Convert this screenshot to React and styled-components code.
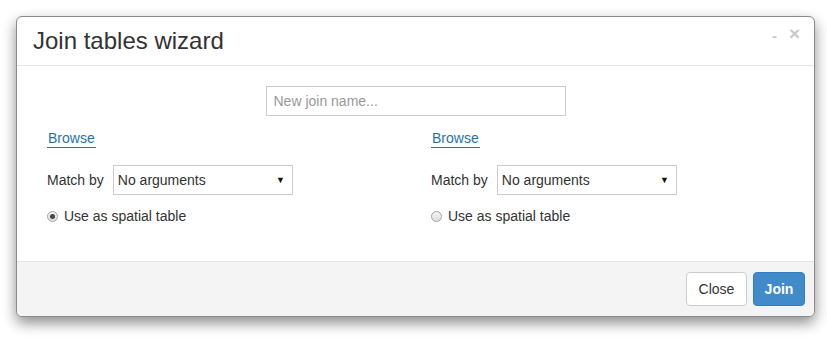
import styled, { createGlobalStyle } from "styled-components";

const GlobalStyle = createGlobalStyle`
  html, body {
    margin: 0;
    padding: 0;
    background: #ffffff;
    font-family: "Liberation Sans", Arial, sans-serif;
    font-size: 14px;
    color: #333333;
  }
`;

const Page = styled.div`
  width: 827px;
  height: 338px;
  padding: 16px 0 0 16px;
  box-sizing: border-box;
`;

const Modal = styled.div`
  width: 799px;
  height: 301px;
  box-sizing: border-box;
  border: 1px solid #8a8a8a;
  border-radius: 6px;
  background: #ffffff;
  box-shadow: 0 6px 14px rgba(0, 0, 0, 0.45);
  display: flex;
  flex-direction: column;
  overflow: hidden;
`;

const Header = styled.div`
  height: 49px;
  box-sizing: border-box;
  border-bottom: 1px solid #e5e5e5;
  display: flex;
  align-items: center;
  justify-content: space-between;
  padding: 0 14px 0 16px;
`;

const Title = styled.h4`
  margin: 0;
  font-size: 24px;
  font-weight: normal;
  color: #333333;
  line-height: 1;
`;

const Controls = styled.div`
  display: flex;
  align-items: center;
  gap: 12px;
  color: #c8c8c8;
  font-weight: bold;
  margin-top: -14px;
`;

const Minimize = styled.span`
  font-size: 14px;
  margin-top: 4px;
`;

const CloseX = styled.span`
  font-size: 19px;
`;

const Body = styled.div`
  flex: 1;
  padding: 20px 15px 0 30px;
  display: flex;
  flex-direction: column;
`;

const NameInput = styled.input`
  align-self: center;
  width: 300px;
  height: 30px;
  box-sizing: border-box;
  border: 1px solid #cccccc;
  padding: 0 7px;
  font-family: inherit;
  font-size: 14px;
  margin-left: -15px;
  &::placeholder {
    color: #999999;
  }
`;

const Columns = styled.div`
  display: grid;
  grid-template-columns: 384px 384px;
  margin-top: 14px;
`;

const Column = styled.div`
  display: flex;
  flex-direction: column;
  align-items: flex-start;
`;

const BrowseLink = styled.a`
  color: #2773a8;
  text-decoration: none;
  border-bottom: 1px solid #2773a8;
  padding: 0 1px 1px 1px;
  line-height: 16px;
`;

const MatchRow = styled.div`
  display: flex;
  align-items: center;
  gap: 9px;
  margin-top: 17px;
`;

const Select = styled.div`
  width: 180px;
  height: 30px;
  box-sizing: border-box;
  border: 1px solid #cccccc;
  display: flex;
  align-items: center;
  justify-content: space-between;
  padding: 0 7px 0 4px;
  color: #333333;
`;

const Caret = styled.span`
  font-size: 9px;
  color: #111111;
`;

const RadioRow = styled.label`
  display: flex;
  align-items: center;
  gap: 6px;
  margin-top: 13px;
`;

const Radio = styled.span`
  width: 11px;
  height: 11px;
  border-radius: 50%;
  box-sizing: border-box;
  border: 1px solid #a5a5a5;
  background: linear-gradient(#f4f4f4, #dcdcdc);
  display: flex;
  align-items: center;
  justify-content: center;
  &::after {
    content: "";
    width: 5px;
    height: 5px;
    border-radius: 50%;
    background: ${(p) => (p.checked ? "#444444" : "transparent")};
  }
`;

const Footer = styled.div`
  height: 55px;
  box-sizing: border-box;
  border-top: 1px solid #e3e3e3;
  background: #f4f4f4;
  display: flex;
  align-items: center;
  justify-content: flex-end;
  gap: 6px;
  padding: 0 9px 0 0;
`;

const Button = styled.button`
  width: ${(p) => (p.primary ? "52px" : "61px")};
  height: 34px;
  padding: 0;
  border-radius: 4px;
  border: 1px solid ${(p) => (p.primary ? "#357ebd" : "#cccccc")};
  background: ${(p) => (p.primary ? "#428bca" : "#ffffff")};
  color: ${(p) => (p.primary ? "#ffffff" : "#333333")};
  font-family: inherit;
  font-size: 14px;
  font-weight: ${(p) => (p.primary ? "bold" : "normal")};
`;

const TablePicker = ({ checked }) => (
  <Column>
    <BrowseLink href="#">Browse</BrowseLink>
    <MatchRow>
      <span>Match by</span>
      <Select>
        <span>No arguments</span>
        <Caret>▼</Caret>
      </Select>
    </MatchRow>
    <RadioRow>
      <Radio checked={checked} />
      <span>Use as spatial table</span>
    </RadioRow>
  </Column>
);

export default function App() {
  return (
    <>
      <GlobalStyle />
      <Page>
        <Modal>
          <Header>
            <Title>Join tables wizard</Title>
            <Controls>
              <Minimize>-</Minimize>
              <CloseX>×</CloseX>
            </Controls>
          </Header>
          <Body>
            <NameInput placeholder="New join name..." />
            <Columns>
              <TablePicker checked />
              <TablePicker />
            </Columns>
          </Body>
          <Footer>
            <Button>Close</Button>
            <Button primary>Join</Button>
          </Footer>
        </Modal>
      </Page>
    </>
  );
}
